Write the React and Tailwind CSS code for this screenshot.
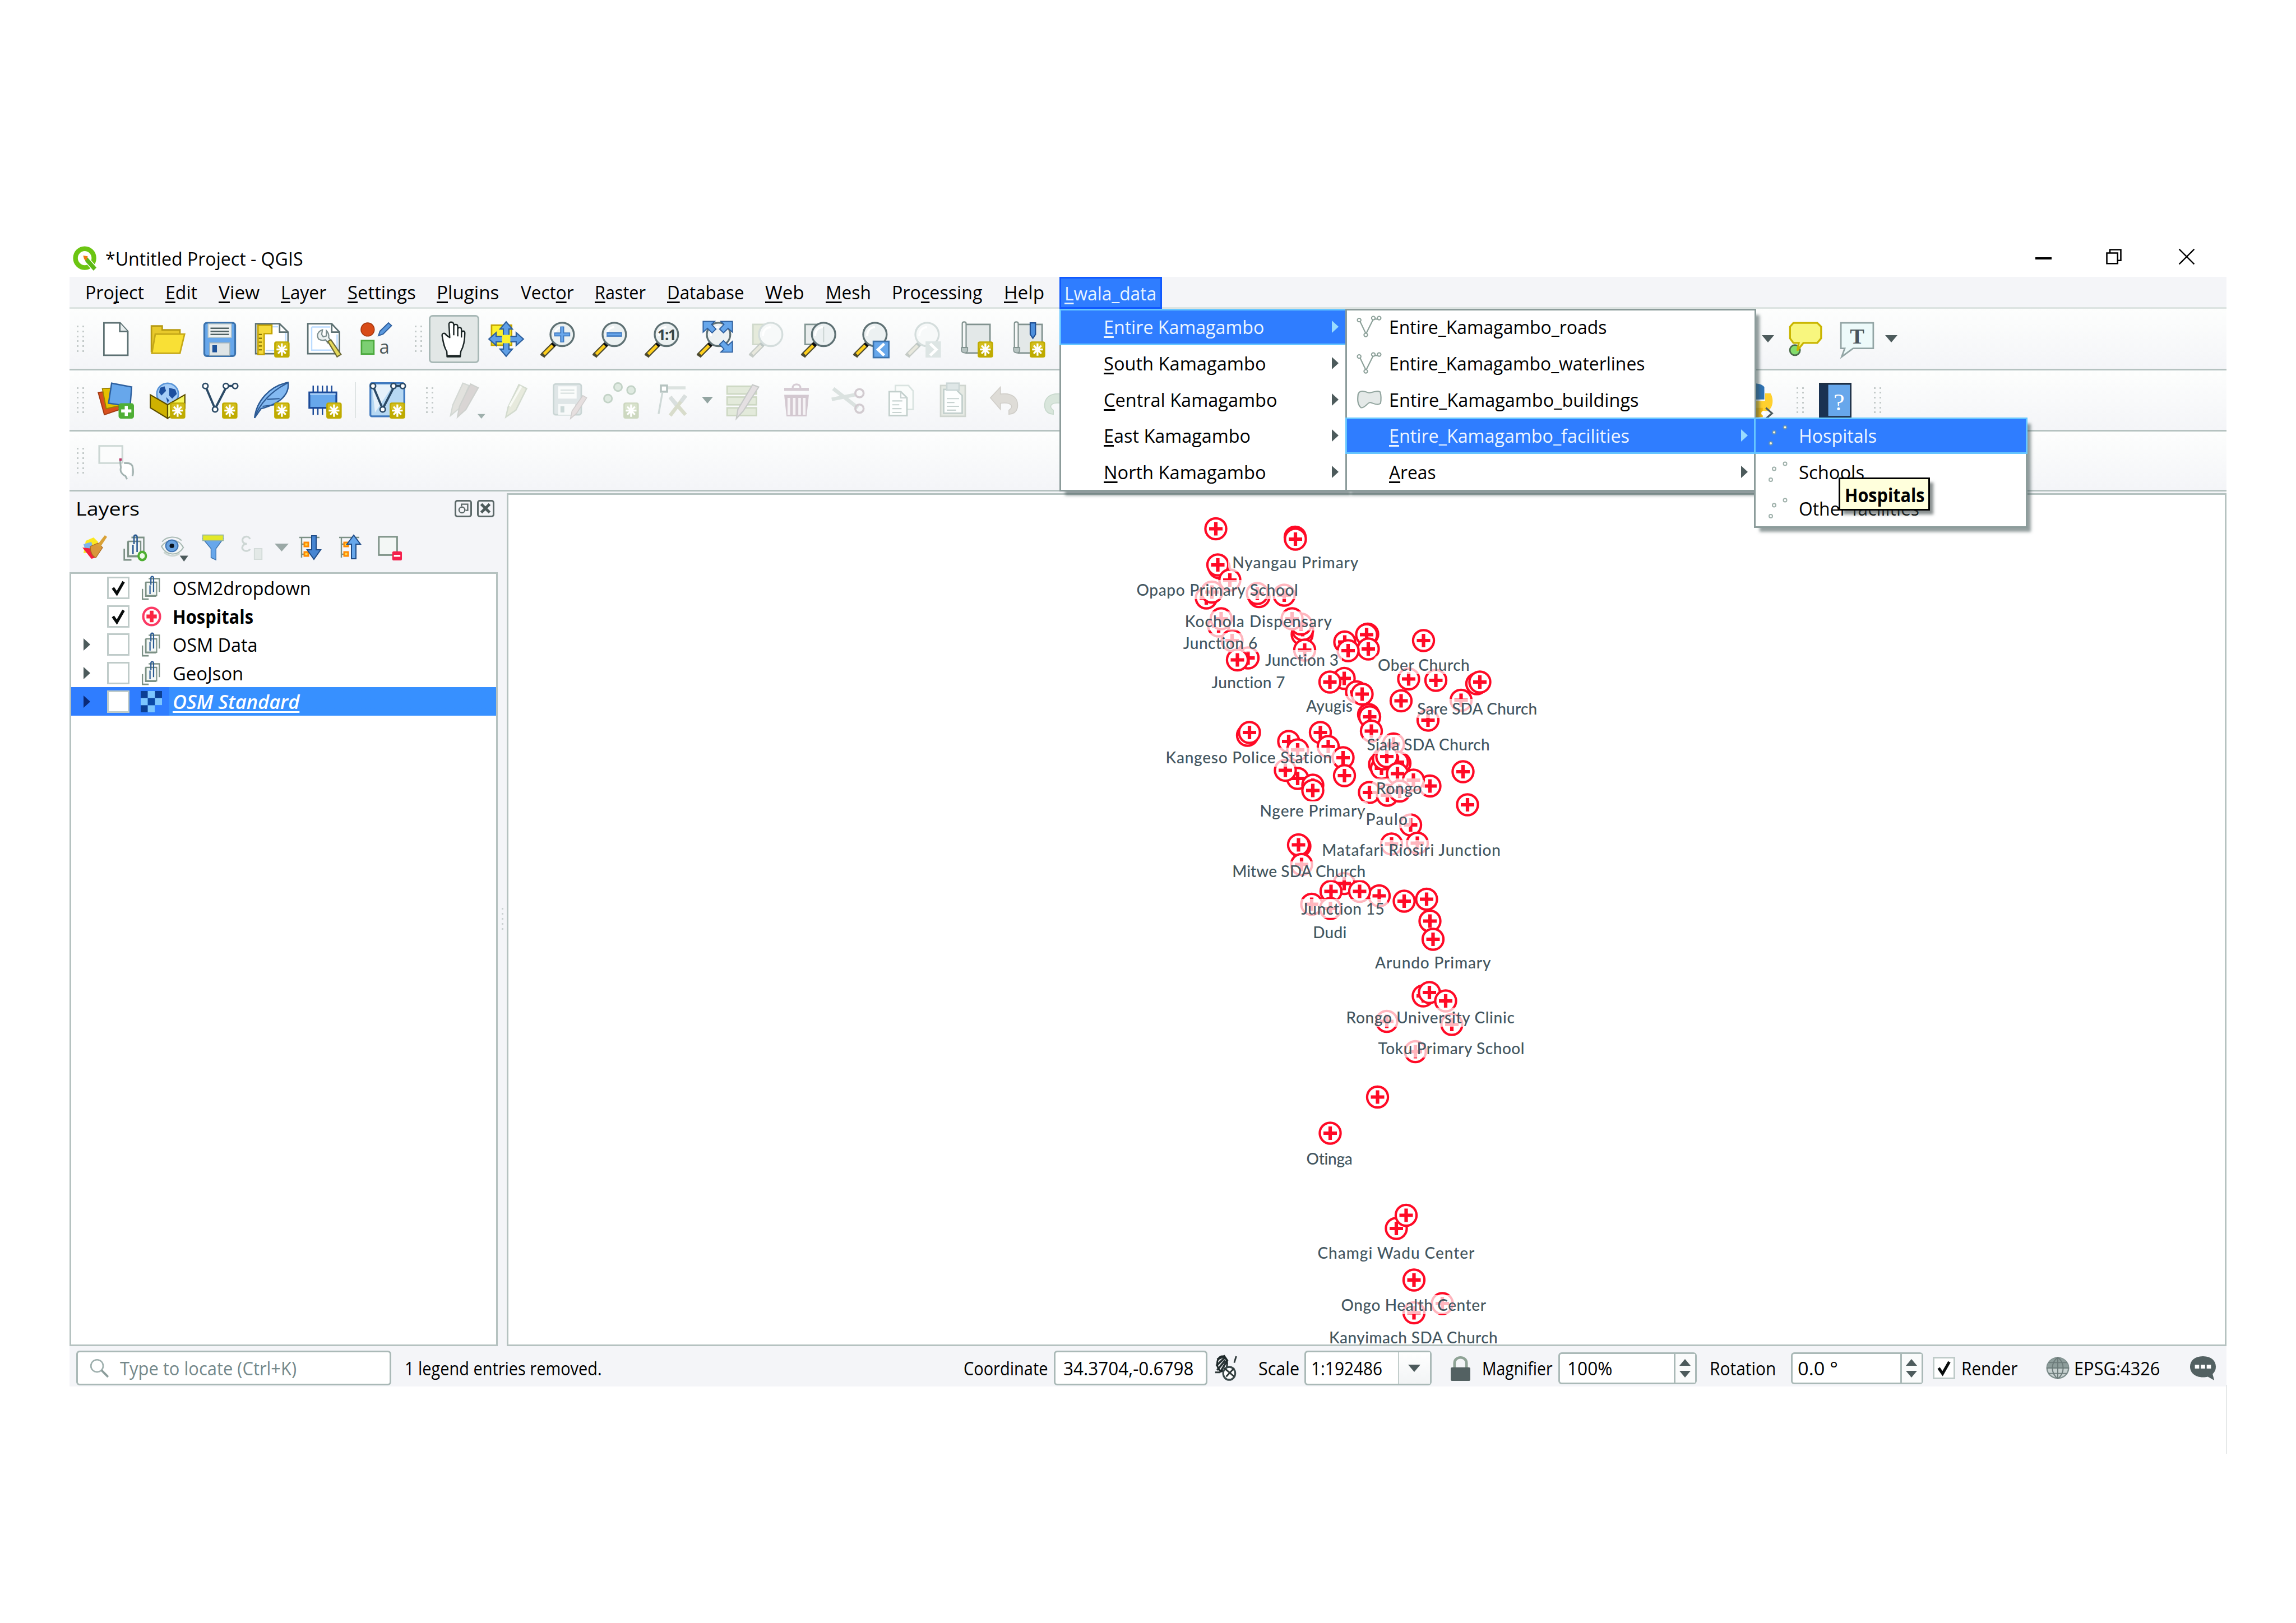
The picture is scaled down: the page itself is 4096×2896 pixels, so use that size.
import React, { useLayoutEffect, useRef } from "react";

/* Text squeezed or stretched to a given width, as the hinted UI font sets it. */
function Fit({ w, children, className = "", spacing = false }) {
  const outer = useRef(null);
  const inner = useRef(null);
  useLayoutEffect(() => {
    const el = inner.current;
    el.style.transform = "none";
    el.style.letterSpacing = "0px";
    outer.current.style.width = w + "px";
    const nat = el.getBoundingClientRect().width;
    if (spacing) {
      el.style.letterSpacing = (w + 2 - nat) / el.textContent.length + "px";
    } else {
      el.style.transform = `translateX(-1px) scaleX(${(w + 2.5) / nat})`;
    }
  }, [w, spacing]);
  return (
    <span ref={outer} className={"inline-block shrink-0 whitespace-nowrap " + className}>
      <span ref={inner} className="inline-block origin-left whitespace-pre">{children}</span>
    </span>
  );
}

/* Label with a mnemonic: "&" stands before the underlined letter. */
function Mnemonic({ text }) {
  const i = text.indexOf("&");
  if (i < 0) return text;
  return (
    <>
      {text.slice(0, i)}
      <span className="underline decoration-[3px] underline-offset-[4px] [text-decoration-skip-ink:none]">{text[i + 1]}</span>
      {text.slice(i + 2)}
    </>
  );
}

const Svg = ({ children, className = "size-[66px]", box = "0 0 24 24" }) => (
  <svg viewBox={box} className={"shrink-0 overflow-visible " + className} fill="none" preserveAspectRatio="none">{children}</svg>
);

const Star = ({ pale }) => (
  <g>
    <rect x="13.5" y="13.5" width="10" height="10.5" rx="1.4" fill={pale ? "#cdd8c0" : "#bfab00"} />
    <rect x="14.5" y="14.3" width="8" height="4" rx="1" fill={pale ? "#d8e2cc" : "#d3bd1c"} />
    <path d="M18.5 14.8v8M15 18.8h7M16 16.2l5 5.2M21 16.2l-5 5.2" stroke="#fff" strokeWidth="1.2" />
  </g>
);
const Plus = () => (
  <g>
    <rect x="14" y="14" width="10" height="10" rx="1.6" fill="#4fae35" />
    <path d="M19 15.7v6.6M15.7 19h6.6" stroke="#fff" strokeWidth="2" />
  </g>
);

const IconNew = () => <Svg><path d="M4.5 1.5h10.5l5 5.5v15.5H4.5z" fill="#fff" stroke="#5c7072" /><path d="M14.8 1.5v5.5h5" fill="#e8eeee" stroke="#5c7072" /></Svg>;
const IconOpen = () => <Svg><path d="M1.5 3.5h7v2.5H20v14H1.5z" fill="#e8c92b" stroke="#b79a12" /><path d="M4 8.8h19l-3 12.4H1.8z" fill="#f9e035" stroke="#c5a818" /></Svg>;
const IconSave = () => (
  <Svg>
    <rect x="2" y="1.5" width="20" height="21.5" rx="1.6" fill="#67a7eb" stroke="#3c73ad" strokeWidth="1.2" />
    <rect x="4.5" y="2.2" width="15" height="8.7" fill="#edf1f1" stroke="#bccaca" strokeWidth=".6" />
    <path d="M6 5h12M6 7h12M6 9h12" stroke="#4f6163" strokeWidth=".9" />
    <rect x="5.5" y="14.5" width="13" height="8" fill="#dfe5e6" stroke="#a7b5b8" strokeWidth=".6" />
    <rect x="7.2" y="16" width="3" height="4.6" fill="#1d529a" />
  </Svg>
);
const IconLayout = () => (
  <Svg>
    <path d="M1.5 2H17l5.5 5.5V21.5H1.5z" fill="#fff" stroke="#5c7072" /><path d="M17 2v5.5h5.5" stroke="#5c7072" />
    <path d="M8 4h8M21 8v11M8 19.5h6" stroke="#bcdcff" strokeWidth=".9" />
    <path d="M3 3h9v5.5H7V22H3z" fill="#f5da3c" stroke="#c2a100" strokeWidth=".9" /><path d="M3.5 9h2M3.5 11.5h2M3.5 14h2M3.5 16.5h2M3.5 19h2" stroke="#7d6a00" strokeWidth=".8" />
    <Star />
  </Svg>
);
const IconManager = () => (
  <Svg>
    <path d="M1.5 2H17l5 5.5V21.5H1.5z" fill="#fff" stroke="#5c7072" /><path d="M17 2v5.5h5" stroke="#5c7072" />
    <path d="M4 4.2h12M4 4.2v15h13M20.5 9v9" stroke="#bcdcff" strokeWidth=".9" />
    <path d="M11 6c-3 1-4 3.500-2.500 6 1.500 1 3 1 4.500.5l1.500 2 2-1.500-1.500-2c.5-2-.5-3.500-1.500-4.500v3.500l-2 .5-1-1.500z" fill="#edf2f2" stroke="#7d8e8e" strokeWidth=".8" />
    <path d="M14.500 13.500l2-1 6.500 9.500-2.500 1.500z" fill="#e6da5b" stroke="#6d6a38" strokeWidth=".8" />
  </Svg>
);
const IconStyle = () => (
  <Svg>
    <circle cx="6.500" cy="5.800" r="4.300" fill="#d84b17" stroke="#a8370e" strokeWidth=".6" />
    <path d="M13.500 9.800l1-3 5.500-5.300 2 1.800-5.500 5.500z" fill="#5a98dd" stroke="#2e5f9e" strokeWidth=".7" />
    <rect x="2.500" y="13" width="8" height="8.700" fill="#7ccf73" stroke="#4aa83c" />
    <text x="14" y="21.300" fontSize="12" fontFamily="Open Sans, sans-serif" fill="#4c5b5c">a</text>
  </Svg>
);
const IconHand = () => (
  <Svg>
    <path d="M7.500 23.500h8.500l.4-3.500c2-3.500 2.600-7 2.600-12 0-1.500-2-1.700-2.200 0V6c0-2-2.300-2-2.400-.2V4c0-2-2.600-2-2.600 0V2.500C11.500.5 8.500.5 8.700 2.500L9.200 11 7 9.500c-.8-1.800-3.200-1.500-2.700.5C5 14 5.500 17.500 7.300 20z" fill="#fff" stroke="#1c2626" strokeWidth=".9" strokeLinejoin="round" />
    <path d="M11.800 4v5.500M14.400 6v4.300M16.800 8v3" stroke="#1c2626" strokeWidth=".9" /><path d="M7.500 23h8.500" stroke="#1c2626" strokeWidth="1.400" />
  </Svg>
);
const IconPan = () => (
  <Svg>
    <rect x="2.500" y="3" width="13" height="13" fill="#fbf12d" stroke="#c5a500" />
    <path d="M12 .8l4 4.700h-2.200v4.700h4.700V7.800L23.200 12l-4.700 4.200v-2.400h-4.700v4.700H16l-4 4.700-4-4.700h2.200v-4.700H5.500v2.400L.8 12l4.700-4.200v2.400h4.700V5.500H8z" fill="#5f9fe6" stroke="#2d5f9e" strokeWidth=".8" />
    <rect x="9.300" y="9.300" width="5.400" height="5.400" fill="#fbf12d" />
  </Svg>
);
const Lens = ({ pale, cx = 14.500 }) => (
  <g>
    <path d="M9 15.500l-6.800 6.800-.6.900" stroke={pale ? "#c5cbc6" : "#4d4a30"} strokeWidth="3.400" />
    <path d="M8.500 16l-5.800 5.800" stroke={pale ? "#e8e8dd" : "#ffcf1c"} strokeWidth="1.900" />
    <path d="M8.300 16.200l2-2" stroke={pale ? "#bdc7c5" : "#0d0d0d"} strokeWidth="3" />
    <circle cx={cx} cy="9" r="7.600" fill={pale ? "#f7f9f9" : "#ecf1f2"} stroke={pale ? "#d4dddc" : "#5f7174"} strokeWidth="1.200" />
    <path d="M9.500 10c0-3.500 2-5.500 5-5.800" stroke="#fff" strokeWidth="1.400" />
  </g>
);
const IconZoomIn = () => <Svg><Lens /><path d="M14.500 3.800v10.400M9.300 9h10.400" stroke="#3f79bf" strokeWidth="2.600" /><path d="M14.500 4.400v9.200M9.900 9h9.200" stroke="#69a7ec" strokeWidth="1.200" /></Svg>;
const IconZoomOut = () => <Svg><Lens /><path d="M9.500 9h10" stroke="#3f79bf" strokeWidth="3" /><path d="M10 9h9" stroke="#69a7ec" strokeWidth="1.200" /></Svg>;
const IconZoomNative = () => <Svg><Lens /><text x="14.500" y="12.800" fontSize="9.500" fontWeight="700" textAnchor="middle" fontFamily="Open Sans, sans-serif" fill="#394547" letterSpacing="-.6">1:1</text></Svg>;
const IconZoomFull = () => (
  <Svg>
    <Lens />
    <path d="M4.500.5h7.500l-2 2 2.800 3-2.500 2.500-3-3-2.800 2.500zM23.500.5H16l2 2-2.800 3L17.700 8l3-3 2.800 2.500zM23.500 20.500H16l2-2-2.800-3 2.500-2.500 3 3 2.800-2.500z" fill="#67a7eb" stroke="#2d5f9e" strokeWidth=".7" />
  </Svg>
);
const IconZoomSel = () => <Svg><rect x="3" y="2.500" width="10" height="13" fill="#e5eadb" stroke="#d0d9cb" /><Lens pale /></Svg>;
const IconZoomLayer = () => <Svg><rect x="3" y="2.500" width="10" height="13" fill="#e9eded" stroke="#829693" /><Lens cx={15} /><path d="M15 4v10" stroke="#cdd6d5" strokeWidth=".8" /></Svg>;
const IconZoomLast = () => <Svg><Lens /><rect x="13.500" y="13.500" width="10" height="10.500" fill="#67a7eb" stroke="#3c73ad" /><path d="M20.500 15l-4 3.800 4 3.800" stroke="#fff" strokeWidth="1.800" /></Svg>;
const IconZoomNext = () => <Svg><Lens pale /><rect x="13.500" y="13.500" width="10" height="10.500" fill="#dde5e4" /><path d="M16.500 15l4 3.800-4 3.800" stroke="#fff" strokeWidth="1.800" /></Svg>;
const MapSheet = () => <g><path d="M5 2.500h16.500v18.500H6z" fill="#e3e8e8" stroke="#81928f" /><path d="M3.500 2c0-1.500 2.500-1.500 2.500 0v15.500H3.500z" fill="#f5f7f7" stroke="#81928f" strokeWidth=".8" /><path d="M3 17.500h4v2c-.5 2-4 2-4-.5z" fill="#b6c3c1" stroke="#81928f" strokeWidth=".6" /></g>;
const IconNewMap = () => <Svg><MapSheet /><Star /></Svg>;
const IconNew3d = () => <Svg><MapSheet /><path d="M13.800 1.500h3.400v7.500L15.500 11.500 13.800 9z" fill="#4d8fdc" stroke="#1f4f93" strokeWidth=".8" /><Star /></Svg>;
const IconTip = () => (
  <Svg>
    <circle cx="5.500" cy="19.200" r="3.300" fill="#82dc6c" stroke="#4b6a4a" />
    <path d="M4.500 1.500h15.500l2.500 2.500v7.500L20 14.500h-9L7 19.500l1-5H4.500L2.300 11.500V4z" fill="#f8f67e" stroke="#c9b500" strokeWidth="1.200" />
  </Svg>
);
const IconText = () => (
  <Svg>
    <path d="M1.500 1.500h21v16.500H9.500L2 23.500l2-5.500H1.500z" fill="#edfafa" stroke="#93a5a5" />
    <text x="12" y="15" fontSize="14" textAnchor="middle" fontFamily="Liberation Serif, serif" fontWeight="700" fill="#48555a">T</text>
  </Svg>
);

const IconDataSource = () => (
  <Svg>
    <path d="M.8 7l4 14.500L15 18 9 6z" fill="#d8501e" stroke="#a33a12" strokeWidth=".7" /><path d="M3.500 4.500L6 17.500l9-2V4z" fill="#e5c200" stroke="#9c8100" strokeWidth=".7" />
    <path d="M9.500 1l13 2.500-1 12.500L7.500 14z" fill="#67a7eb" stroke="#2d5f9e" strokeWidth=".9" /><Plus />
  </Svg>
);
const IconGeoPackage = () => (
  <Svg>
    <circle cx="12" cy="8" r="7" fill="#a6cdf7" stroke="#5a95d8" /><path d="M7 4l3-1 1 3-3 3-1.500-2zM13 4l4 1 1 3-3 3-2-2zM11 10l2 2-1 2z" fill="#1d4f9f" />
    <path d="M.8 8.500L12 15v8.800L.8 17z" fill="#cfb100" stroke="#5c4d00" strokeWidth=".8" /><path d="M23.200 8.500L12 15v8.800l11.200-6.500z" fill="#f6f65c" stroke="#5c4d00" strokeWidth=".8" /><Star />
  </Svg>
);
const Nodes = ({ c = "#2b4a66" }) => (
  <g stroke={c} strokeWidth="1"><path d="M3.200 4l5.500 13M9.300 17L16 4M17.500 2.800h4" strokeWidth="1.400" /><circle cx="2.700" cy="2.800" r="1.700" fill="#fff" /><circle cx="16" cy="2.800" r="1.700" fill="#fff" /><circle cx="22" cy="2.800" r="1.700" fill="#fff" /><circle cx="9" cy="18" r="1.700" fill="#fff" /></g>
);
const IconShape = () => <Svg><Nodes /><Star /></Svg>;
const IconSpatialite = () => <Svg><path d="M.8 23.500C2 13 10 3 22.500.5c1 7-4 13.500-17.500 17z" fill="#83b9f2" stroke="#2c5a94" strokeWidth=".9" /><path d="M.8 23.500C4 14 12 6 22 1M6 16l8-1M9 11.500l8-.5" stroke="#2c5a94" strokeWidth=".8" /><Star /></Svg>;
const IconMemory = () => (
  <Svg><path d="M5 2.500v19M8 2.500v19M11 2.500v19M14 2.500v17M17 2.500v17" stroke="#1c4b99" strokeWidth=".9" /><rect x="2.500" y="7" width="17.500" height="10" fill="#67a7eb" stroke="#1c4b99" strokeWidth="1.200" /><path d="M3 8h16.500" stroke="#b4d7fb" /><Star /></Svg>
);
const IconVirtual = () => <Svg><rect x="1" y="1" width="22" height="21.500" rx="1" fill="#b6d8f3" stroke="#3f79bf" strokeWidth="1.200" /><path d="M2 2h14L4 20z" fill="#e6f1fa" /><Nodes /><Star /></Svg>;
const IconPencils = () => (
  <Svg><path d="M1 22l1.500-7L9 1l4 1.500L7 17z" fill="#e2e2de" stroke="#d3d8d4" strokeWidth=".8" /><path d="M5.500 23l1.300-7L14 1.500 19 4 11 18z" fill="#d9d5d4" stroke="#ced1ce" strokeWidth=".8" /><path d="M18.500 21h5L21 24z" fill="#9eafac" /></Svg>
);
const IconPencil = () => <Svg><path d="M4.500 23l1.500-6.500L13 2l5 2.500-7 14z" fill="#e7eadd" stroke="#d3dbcf" strokeWidth=".9" /><path d="M7 16l7.500-13" stroke="#f8faf4" strokeWidth="1.400" /></Svg>;
const IconSaveEdits = () => (
  <Svg><rect x="2" y="1.500" width="18" height="20" rx="1.500" fill="#dfe6e7" stroke="#c9d5d4" /><rect x="5" y="3" width="12" height="8" fill="#fafcfb" /><path d="M6.500 5.500h9M6.500 7.500h9" stroke="#d9e1e0" strokeWidth=".8" /><rect x="5" y="14.500" width="11" height="7" fill="#f7f9f9" /><rect x="6.500" y="16" width="2.500" height="4" fill="#ccd9d8" /><path d="M13 24l1-5 7-10 2.500 1.500-6.500 10z" fill="#e6dfdf" stroke="#d1cece" strokeWidth=".6" /></Svg>
);
const IconPoints = () => <Svg><g fill="#dfeae1" stroke="#c3d3c7"><circle cx="10" cy="3.500" r="2.600" /><circle cx="18.500" cy="5.500" r="2.600" /><circle cx="3.500" cy="11" r="2.600" /></g><Star pale /></Svg>;
const IconVertex = () => (
  <Svg><path d="M6 4h14" stroke="#dce3e0" strokeWidth="2" /><rect x="4" y="2.500" width="4" height="4" fill="#fff" stroke="#b5c3c0" strokeWidth="1.300" /><path d="M5 7L2.500 21" stroke="#cfd9d7" strokeWidth="1.200" /><path d="M10 10l10 11.500M20 9L10 22" stroke="#d8dccb" strokeWidth="2.400" /><path d="M10 10l4 5M20 9l-3 4" stroke="#d9dfde" strokeWidth="2.600" /></Svg>
);
const IconTable = () => (
  <Svg><g fill="#e3eadb" stroke="#cdd8c3"><rect x="1.500" y="3" width="19" height="5" /><rect x="1.500" y="10" width="19" height="5" /><rect x="1.500" y="17" width="19" height="5" /></g><path d="M7.500 24l1-6L18 2l4 1.500L12 19z" fill="#e4e0e2" stroke="#c7cac8" strokeWidth=".8" /></Svg>
);
const IconTrash = () => <Svg><path d="M4 4h16v2H4z" fill="#d6ccd4" /><path d="M9.500 4c0-3 5-3 5 0" stroke="#d6ccd4" strokeWidth="1.200" /><path d="M4 8.500h16l-1.500 14h-13z" fill="#d3c8d0" /><path d="M7 10.500v11M10.500 10.500v11M14 10.500v11M17 10.500v11" stroke="#f6f4f6" strokeWidth="1.700" /></Svg>;
const IconCut = () => <Svg><path d="M2 4.500l16 12.500M1 11.500l15-3" stroke="#dbe2e0" strokeWidth="2.400" /><circle cx="19" cy="7.500" r="2.700" stroke="#d2cbd0" strokeWidth="1.300" /><circle cx="19" cy="17.500" r="2.700" stroke="#d2cbd0" strokeWidth="1.300" /></Svg>;
const IconCopy = () => <Svg><path d="M8.500 2.500H17l3 3.500v12H8.500z" fill="#fafcfb" stroke="#d9e3e0" /><path d="M4.500 6.500H12l4 4v11.500H4.500z" fill="#fdfefe" stroke="#c2cfcc" /><path d="M12 6.500v4h4M6.500 12.500H13M6.500 15H11M6.500 17.500h6M6.500 20h6" stroke="#c8d3d1" strokeWidth=".8" /></Svg>;
const IconPaste = () => <Svg><rect x="4" y="2.500" width="16" height="20" fill="#e6eae4" stroke="#cfd5cf" /><path d="M6 5h8l4 4v11.500H6z" fill="#fdfefe" stroke="#c2cfcc" /><rect x="8" y="1" width="8" height="4.500" fill="#dfe7e7" stroke="#ccd7d7" /><path d="M8 11h8M8 13.500h5M8 16h8M8 18.500h6" stroke="#c8d3d1" strokeWidth=".8" /></Svg>;
const IconUndo = () => <Svg><path d="M2.500 10.500l6.500-7v4.500c8-1 12 3 11 9-.6 2.500-2.500 4-5.500 4.200v-2.700c3-1.800 2.500-5.500-5.500-4.500v4z" fill="#dedcd7" stroke="#d0cec9" strokeWidth=".6" /></Svg>;
const IconRedo = () => <Svg><path d="M21.500 10.500l-6.500-7v4.500c-8-1-12 3-11 9 .6 2.500 2.500 4 5.500 4.200v-2.700c-3-1.800-2.500-5.500 5.500-4.500v4z" fill="#d9e6dc" stroke="#c7d8cc" strokeWidth=".6" /></Svg>;
const IconPython = () => (
  <Svg><path d="M5 2.500C8 .5 16 .5 18 3.500v8H8v5H3c-3-4-2-10 2-10h7" fill="#2f73b4" /><path d="M18.500 7.500H22c2.500 4 1.500 10-2 11.500h-7v2.500H8v-6c0-2 1-3 3-3h7.500z" fill="#ffd02e" /><path d="M10 17h7v6h-7z" fill="#f3b90c" /><path d="M19 17l4 3.500-4 3.500" stroke="#4d5b5d" strokeWidth="1.200" /><circle cx="17.500" cy="20.500" r="1.500" fill="#fff" /></Svg>
);
const IconHelp = () => (
  <Svg className="h-[62px] w-[58px]" box="0 0 21 23"><rect x=".5" y=".5" width="20" height="22" fill="#67a7eb" stroke="#1e2f44" /><path d="M0 0h6v23H0z" fill="#1a3252" /><path d="M0 0h21v1.300H0z" fill="#1e2f44" /><text x="13" y="18" fontSize="16" textAnchor="middle" fontFamily="Liberation Serif, serif" fill="#fff">?</text></Svg>
);

const Grip = () => (
  <div className="grid grid-cols-2 gap-x-[7px] gap-y-[5.800px]">
    {Array.from({ length: 12 }, (_, i) => <i key={i} className="size-[3px] bg-[#c3cac9]" />)}
  </div>
);
const GripCell = ({ className }) => <div className={"flex h-full shrink-0 items-center justify-center " + className}><Grip /></div>;
const Cell = ({ className = "w-[93px]", children }) => <div className={"flex h-full shrink-0 items-center justify-center " + className}>{children}</div>;
const Down = ({ className = "h-[13px] w-[22px]", fill = "#4d5b5c" }) => <Svg className={className} box="0 0 20 12"><path d="M0 0h20L10 12z" fill={fill} /></Svg>;
const Up = () => <Svg className="h-[12px] w-[20px]" box="0 0 20 12"><path d="M0 12h20L10 0z" fill="#4d5b5c" /></Svg>;
const RightArrow = ({ fill = "#4d5b5c" }) => <Svg className="h-[22px] w-[12px]" box="0 0 12 22"><path d="M0 0v22L12 11z" fill={fill} /></Svg>;

const MENUS = [["Pro&ject", 102.5], ["&Edit", 54.4], ["&View", 70.6], ["&Layer", 78.8], ["&Settings", 119.3], ["&Plugins", 108.9], ["Vect&or", 92], ["&Raster", 88.5], ["&Database", 135], ["&Web", 67.2], ["&Mesh", 78.4], ["Pro&cessing", 159], ["&Help", 69.6]];

const bar = "flex shrink-0 items-center border-b-[3px] border-[#b5c2c0] bg-linear-to-b from-[#fdfefd] to-[#f4f5f8]";

/* ---------- layers dock ---------- */
const IconBrush = () => <Svg className="size-[48px]"><path d="M4 6l7-3 4 4-4 9-9 1z" fill="#fbe820" /><path d="M2 9l7-2 2 7-7 2z" fill="#7fb4ec" /><path d="M1 12l9 1 3 8-4 1z" fill="#f5203c" /><path d="M8 11l7-3 4 4-6 9c-3-1-5-5-5-10z" fill="#d9973a" stroke="#a96a1c" strokeWidth=".6" /><path d="M14 10l7-9 2 1.500-6 9z" fill="#d9a136" /></Svg>;
const GroupShape = () => (
  <g><path d="M9 3h12v13M5.500 6.500V20h12" stroke="#7c9186" strokeWidth="1.400" /><rect x="6" y="6.500" width="12" height="13" fill="#f3f7f5" stroke="#7c9186" strokeWidth="1.300" /><path d="M2 13v10h7" stroke="#7c9186" strokeWidth="1.500" /><path d="M10.500 9.500v8.500M14.500 16V2.500c0-2-3-2-3 0V9" stroke="#2b5a92" strokeWidth="1.400" /></g>
);
const IconGroup = () => <Svg className="h-[44px] w-[38px]"><GroupShape /></Svg>;
const IconAddGroup = () => <Svg className="h-[48px] w-[44px]"><GroupShape /><circle cx="19.500" cy="19.500" r="3.600" fill="#eef9ea" stroke="#4eae32" strokeWidth="2.200" /></Svg>;
const IconEye = () => <Svg className="h-[50px] w-[52px]"><path d="M1 11c5-7 14-7 18 1-5 8-14 7-18-1z" fill="#f5f8f7" stroke="#a9bab4" /><path d="M1.500 7c4-5 12-5 16-1" stroke="#a9bab4" /><circle cx="9.500" cy="10.500" r="5" fill="#6aa3e0" stroke="#3f74b4" /><circle cx="9.500" cy="10.500" r="1.900" fill="#08131f" /><path d="M3 16c4 4 9 4 13 1" stroke="#ccd6d2" strokeWidth="1.400" /><path d="M16 19h7l-3.500 5z" fill="#4d5b5c" /></Svg>;
const IconFilter = () => <Svg className="h-[48px] w-[42px]"><path d="M1.500 4h21L15 13v10l-5-2V13z" fill="#67a7eb" stroke="#3c73ad" strokeWidth=".8" /><path d="M1.500.8h21v5h-21z" fill="#e3e829" stroke="#93b4a0" strokeWidth=".8" /></Svg>;
const IconExpr = () => <Svg className="size-[46px]"><path d="M10 4c-2-4-8-2-7 2 .3 1.500 1.500 2.500 4 2.500-4 0-5.500 4-3 6 2 1.500 5 .5 6-1" stroke="#cdd6d4" strokeWidth="1.700" /><path d="M14 13h7v10h-7z" fill="#e3e9e7" stroke="#d3dbd9" /></Svg>;
const IconExpand = () => <Svg className="size-[48px]"><path d="M1 3h18M3 3v18M3 9h4M3 18h4" stroke="#7c9186" strokeWidth="1.200" /><g fill="#ffd84a" stroke="#ff8a00" strokeWidth="1.500"><rect x="5.500" y="7.500" width="3.500" height="3.500" /><rect x="5.500" y="16" width="3.500" height="3.500" /></g><path d="M12 1.500h4V14h4l-6 8.500L8 14h4z" fill="#4685d2" stroke="#1f4c88" /></Svg>;
const IconCollapse = () => <Svg className="size-[48px]"><path d="M1 3h18M3 3v18M3 9h4M3 18h4" stroke="#7c9186" strokeWidth="1.200" /><g fill="#ffd84a" stroke="#ff8a00" strokeWidth="1.500"><rect x="5.500" y="7.500" width="3.500" height="3.500" /><rect x="5.500" y="16" width="3.500" height="3.500" /></g><path d="M12 22V9H8l6-8 6 8h-4v13z" fill="#67a7eb" stroke="#1f4c88" /></Svg>;
const IconRemove = () => <Svg className="size-[46px]"><rect x="2" y="2" width="17" height="17" fill="#f3f7f5" stroke="#7c9186" strokeWidth="1.500" /><rect x="14.500" y="15.500" width="9" height="8.500" rx="1.500" fill="#f5204c" /><path d="M16 19.700h6" stroke="#fff" strokeWidth="1.800" /></Svg>;
const Marker = ({ x, y }) => (
  <g transform={`translate(${x} ${y})`}><circle r="18.600" fill="#fff" stroke="#ff0a26" strokeWidth="4.200" /><path d="M0-12v24M-12 0h24" stroke="#ff0a26" strokeWidth="6.200" /></g>
);
const IconHospital = () => <Svg className="h-[36px] w-[35px]" box="-21 -21 42 42"><circle r="18" fill="#fff" stroke="#fb3a64" strokeWidth="5" /><path d="M0-12v24M-11 0h22" stroke="#fb2440" strokeWidth="8" /></Svg>;
const IconRaster = () => (
  <Svg className="size-[38px]" box="0 0 6 6"><rect width="6" height="6" fill="#3a8ff5" /><path d="M0 0h2v2H0zM4 0h2v2H4zM2 2h2v2H2zM0 4h2v2H0z" fill="#0b3f94" /><path d="M2 0h2v2H2zM0 2h2v2H0zM4 2h2v2H4zM2 4h2v2H2z" fill="#7cc6ff" /><path d="M4 4h2v2H4z" fill="#2f7dff" /><path d="M2 2h2v2H2z" fill="#0b4aa8" /></Svg>
);
const CheckBox = ({ on }) => (
  <span className="flex size-[40px] shrink-0 items-center justify-center border-[3px] border-[#bfcbc9] bg-white">
    {on && <Svg className="h-[28px] w-[24px]" box="0 0 24 28"><path d="M2.500 14l7 10L21.500 3" stroke="#080c0c" strokeWidth="5" /></Svg>}
  </span>
);

const LAYERS = [
  { name: "OSM2dropdown", w: 244, on: true, icon: <IconGroup /> },
  { name: "Hospitals", w: 141.6, on: true, icon: <IconHospital />, cls: "font-bold" },
  { name: "OSM Data", w: 149, arrow: true, icon: <IconGroup /> },
  { name: "GeoJson", w: 123.7, arrow: true, icon: <IconGroup /> },
  { name: "OSM Standard", w: 223.8, arrow: true, icon: <IconRaster />, sel: true, cls: "font-semibold italic text-white" },
];

function LayersDock() {
  return (
    <section className="flex w-[764px] shrink-0 flex-col">
      <div className="flex h-[60px] items-center pl-[12px]">
        <Fit w={111.500}>Layers</Fit>
        <span className="ml-[563px] flex h-[31px] w-[31px] items-center justify-center rounded-[5px] border-[3px] border-[#5c6969]">
          <Svg className="size-[19px]"><path d="M8 7V2h14v14h-5" stroke="#5c6969" strokeWidth="3" /><circle cx="9" cy="15" r="6.500" stroke="#5c6969" strokeWidth="3" /></Svg>
        </span>
        <span className="ml-[9px] flex h-[31px] w-[31px] items-center justify-center rounded-[5px] border-[3px] border-[#5c6969]">
          <Svg className="size-[20px]"><path d="M3 3l18 18M21 3L3 21" stroke="#4d5a5a" strokeWidth="6" /></Svg>
        </span>
      </div>
      <div className="flex h-[84px] items-center pb-[4px] pl-[10px]">
        <Cell className="w-[70px]"><IconBrush /></Cell>
        <Cell className="w-[71px]"><IconAddGroup /></Cell>
        <Cell className="w-[74px]"><IconEye /></Cell>
        <Cell className="w-[62px]"><IconFilter /></Cell>
        <Cell className="w-[78px]"><IconExpr /></Cell>
        <Cell className="w-[26px]"><Down className="h-[14px] w-[25px]" fill="#9aa8a6" /></Cell>
        <Cell className="w-[81px]"><IconExpand /></Cell>
        <Cell className="w-[62px]"><IconCollapse /></Cell>
        <Cell className="w-[74px]"><IconRemove /></Cell>
      </div>
      <div className="flex flex-1 flex-col border-[3px] border-[#b5c2c0] bg-white">
        {LAYERS.map((l) => (
          <div key={l.name} className={"flex h-[50.600px] shrink-0 items-center " + (l.sel ? "bg-linear-to-r from-[#2f7dff] from-[174px] to-[#3790ff] to-[175px]" : "")}>
            <span className="flex w-[64px] pl-[22px]">{l.arrow && <RightArrow fill={l.sel ? "#0a2a78" : "#4d5b5c"} />}</span>
            <CheckBox on={l.on} />
            <span className="flex w-[78px] items-center justify-center">{l.icon}</span>
            <Fit w={l.w} className={l.cls || ""}>
              {l.sel ? <span className="underline decoration-[3px] underline-offset-[4px] [text-decoration-skip-ink:none]">{l.name}</span> : l.name}
            </Fit>
          </div>
        ))}
      </div>
    </section>
  );
}

/* ---------- map canvas ---------- */
const SITES = [
  [2169, 943.5], [2310.5, 958.5], [2311, 962], [2175, 1013], [2172.5, 1008], [2194, 1035], [2152, 1067], [2162, 1056.5], [2246, 1064.5], [2243, 1059], [2291, 1062],
  [2174, 1117], [2178.5, 1104], [2198, 1143], [2323, 1132], [2324, 1123.5], [2321, 1113.5], [2305, 1104], [2327.5, 1160], [2226.5, 1174], [2207.5, 1177.5],
  [2440, 1131.5], [2438, 1132.5], [2399, 1145.5], [2441, 1158], [2405, 1161], [2539.5, 1143], [2398, 1210.5], [2372.5, 1217], [2513, 1211.5], [2561.5, 1214],
  [2634.5, 1220], [2640, 1217], [2420, 1234.5], [2430, 1238.5], [2499.5, 1250.5], [2606.5, 1249.5], [2547.5, 1285], [2441.5, 1275], [2443.5, 1279], [2446.5, 1304.5],
  [2225.5, 1312], [2229, 1307], [2355.5, 1307], [2299, 1323], [2315, 1338], [2369.5, 1332], [2396, 1352], [2398.5, 1384], [2486, 1327.5], [2497.5, 1362], [2493, 1360],
  [2461, 1364], [2464.5, 1371], [2468, 1354], [2474, 1350], [2493, 1380.5], [2551, 1402.5], [2521.5, 1392], [2610, 1377], [2618, 1436], [2443, 1414], [2475, 1419], [2497, 1411.5],
  [2315, 1389], [2293, 1374.5], [2342, 1401], [2342, 1410.5], [2516.5, 1472], [2482.5, 1506], [2528.5, 1504.5], [2319, 1510], [2316.5, 1507.5], [2322, 1542.5],
  [2398, 1576.5], [2374.5, 1590.5], [2460.5, 1598.5], [2425.5, 1590.5], [2340, 1613.5], [2373.5, 1621], [2505, 1608], [2545, 1604.5], [2551, 1643.5], [2556.5, 1676],
  [2539, 1777], [2550, 1771], [2579, 1786], [2474, 1822.5], [2590, 1828], [2525, 1876.5], [2457.5, 1957.5], [2373, 2022], [2491, 2192], [2508.5, 2168.5], [2522.5, 2284], [2573, 2326], [2522.5, 2342.5],
];
const PLACES = [
  ["Nyangau Primary", 2198.8, 2422.7, 1013], ["Opapo Primary School", 2027.9, 2315, 1062.7], ["Kochola Dispensary", 2114.3, 2375.7, 1118.8], ["Junction 6", 2111.3, 2242.7, 1157],
  ["Junction 3", 2257.4, 2387.3, 1187], ["Ober Church", 2458.6, 2620.8, 1196.2], ["Junction 7", 2161.9, 2291.8, 1227.8], ["Ayugis", 2330.7, 2411.6, 1269.3],
  ["Sare SDA Church", 2528.8, 2741, 1274.2], ["Siala SDA Church", 2438.9, 2656.7, 1338.8], ["Kangeso Police Station", 2080, 2375.7, 1361], ["Rongo", 2455.5, 2535.6, 1416.5],
  ["Ngere Primary", 2248, 2435, 1456.6], ["Paulo", 2437, 2511, 1471.9], ["Matafari Riosiri Junction", 2358.8, 2676.8, 1526.7], ["Mitwe SDA Church", 2198.7, 2434.7, 1564],
  ["Junction 15", 2322, 2469, 1631.7], ["Dudi", 2342.7, 2401, 1673.6], ["Arundo Primary", 2453.6, 2658.8, 1727.5], ["Rongo University Clinic", 2402, 2701, 1825.5],
  ["Toku Primary School", 2459, 2718.6, 1880], ["Otinga", 2331, 2411.5, 2077], ["Chamgi Wadu Center", 2351, 2629.7, 2245], ["Ongo Health Center", 2393, 2650, 2338.9],
  ["Kanyimach SDA Church", 2371.5, 2670.6, 2396.8],
];
const ORIGIN = { x: 907, y: 883 };

function MapCanvas() {
  return (
    <section className="relative mt-[3px] flex-1 overflow-hidden border-[3px] border-[#b5c2c0] bg-white">
      <svg viewBox="907 883 3062 1516" className="absolute left-0 top-0 h-[1516px] w-[3062px]">
        {SITES.map(([x, y], i) => <Marker key={i} x={x} y={y} />)}
      </svg>
      {PLACES.map(([name, l, r, base]) => (
        <span key={name} className="absolute flex h-[34px] items-center rounded-[9px] bg-white/70 px-[7px] font-['Lato',sans-serif] text-[28px] font-medium leading-[34px] text-[#435660]" style={{ left: l - 7.5 - ORIGIN.x, top: base - 27.5 - ORIGIN.y }}>
          <Fit spacing w={r - l}>{name}</Fit>
        </span>
      ))}
    </section>
  );
}

/* ---------- status bar ---------- */
const Search = () => <Svg className="size-[35px]"><circle cx="9" cy="9" r="7.500" stroke="#9fb0ae" strokeWidth="1.800" /><path d="M14.500 14.500l8 8" stroke="#8b9d9b" strokeWidth="2.600" /></Svg>;
const field = "flex shrink-0 items-center rounded-[6px] border-[3px] border-[#aab9b7] bg-white";
const Spin = () => <span className="flex h-full w-[38px] shrink-0 flex-col items-center justify-center gap-[9px] border-l-[3px] border-[#aab9b7] bg-[#fafbfb]"><Up /><Down className="h-[12px] w-[20px]" /></span>;

function StatusBar() {
  return (
    <footer className="flex h-[72px] shrink-0 items-center bg-[#f4f5f8] pl-[12px] pt-[6px]">
      <div className={field + " h-[62px] w-[562px] pl-[21px]"}>
        <Search /><Fit w={312.600} className="ml-[20px] text-[#74888a]">Type to locate (Ctrl+K)</Fit>
      </div>
      <Fit w={349} className="ml-[25px]">1 legend entries removed.</Fit>
      <Fit w={148} className="ml-[648px]">Coordinate</Fit>
      <div className={field + " ml-[12px] h-[62px] w-[274px] pl-[15px]"}><Fit w={230}>34.3704,-0.6798</Fit></div>
      <Svg className="ml-[12px] h-[46px] w-[43px]">
        <path d="M3 4l7-3 3 4-7 11M2 10l9-8M3 14l8-9" stroke="#283334" strokeWidth="2" /><ellipse cx="8" cy="8" rx="5" ry="7" stroke="#1d2728" strokeWidth="1.600" /><ellipse cx="15" cy="17" rx="6" ry="6" fill="#fff" stroke="#3c4a4b" strokeWidth="1.800" /><path d="M10 12l10 8M12 20l8-8M22 1l-2 6M1 16h5" stroke="#2d3838" strokeWidth="1.600" />
      </Svg>
      <Fit w={70.700} className="ml-[37px]">Scale</Fit>
      <div className={field + " ml-[10px] h-[62px] w-[227px] justify-between pl-[10px]"}>
        <Fit w={124.600}>1:192486</Fit>
        <span className="flex h-full w-[57px] items-center justify-center border-l-[2px] border-[#c3cecc] bg-linear-to-b from-white to-[#f2f4f5]"><Down /></span>
      </div>
      <Svg className="ml-[34px] h-[45px] w-[35px]" box="0 0 18 24"><path d="M3.500 12V7c0-7 11-7 11 0v5" stroke="#8fa396" strokeWidth="2.400" /><rect x="0" y="11" width="18" height="13" rx="1.500" fill="#536162" /></Svg>
      <Fit w={123} className="ml-[22px]">Magnifier</Fit>
      <div className={field + " ml-[12px] h-[57px] w-[247px] justify-between pl-[14px]"}><Fit w={78}>100%</Fit><Spin /></div>
      <Fit w={116} className="ml-[24px]">Rotation</Fit>
      <div className={field + " ml-[28px] h-[57px] w-[236px] justify-between pl-[10px]"}><Fit w={69.500}>0.0 °</Fit><Spin /></div>
      <span className="ml-[17px] flex"><CheckBox on /></span>
      <Fit w={98} className="ml-[12px]">Render</Fit>
      <Svg className="ml-[51px] h-[42px] w-[44px]"><circle cx="12" cy="12" r="10.500" fill="#c6d0cf" stroke="#7d8d8c" strokeWidth="1.300" /><path d="M1.500 12C3-2 21-2 22.500 12z" fill="#8d9d9b" /><path d="M12 1v22M1 12h22M3 6.500h18M3 17.500h18M12 1c-7 6-7 16 0 22M12 1c7 6 7 16 0 22" stroke="#6c7b7a" strokeWidth="1.100" /></Svg>
      <Fit w={151} className="ml-[8px]">EPSG:4326</Fit>
      <Svg className="ml-[55px] h-[45px] w-[46px]"><path d="M12 .5C4 .5 0 5 0 10.500S4.500 20.500 12 20.500c2 0 3 0 4.500-.5l6 3.500-1.500-6c2-2 3-4 3-7C24 5 20 .5 12 .5z" fill="#536162" /><path d="M4.500 10.500h4M10 10.500h4M15.500 10.500h4" stroke="#fff" strokeWidth="3.600" /></Svg>
    </footer>
  );
}

/* ---------- menus ---------- */
const LineIcon = () => <Svg className="h-[40px] w-[45px]" box="0 0 24 22"><path d="M3 5l6 13L16 3.500h5" stroke="#8da19a" strokeWidth="1.200" /><g fill="#fff" stroke="#8da19a" strokeWidth="1.100"><circle cx="2.500" cy="4.500" r="1.700" /><circle cx="8.800" cy="19" r="1.700" /><circle cx="16" cy="2.500" r="1.700" /><circle cx="21.500" cy="2.500" r="1.700" /></g></Svg>;
const PolyIcon = () => <Svg className="h-[34px] w-[45px]" box="0 0 24 20"><path d="M1.500 4.500C3-.5 7 1 12 3c4-.5 7-3 10.500-1 1 4 1 8 .3 12-3 2.500-6 0-10-1-3 1-5 6-8.500 5.500C.5 15 1 9 1.500 4.500z" fill="#e4e9e8" stroke="#92a59f" strokeWidth="1.200" /></Svg>;
const PointIcon = ({ on }) => <Svg className="h-[40px] w-[34px]" box="0 0 34 40"><g fill={on ? "#fff6cf" : "#fff"} stroke={on ? "#5d8fbd" : "#9fb1ab"} strokeWidth="2"><circle cx="4" cy="34" r="3" /><circle cx="10" cy="14.500" r="3" /><circle cx="29.500" cy="5.500" r="3" /></g></Svg>;

function MenuItem({ text, w, hot, arrow, icon, gutter }) {
  return (
    <div className={"flex h-[64.700px] shrink-0 items-center " + (hot ? "-mx-[3px] border-[3px] border-[#66c6ff] bg-[#2f7dff] text-[#eef6ff]" : "")}>
      <span className={"flex shrink-0 items-center " + gutter}>{icon}</span>
      <Fit w={w}><Mnemonic text={text} /></Fit>
      {arrow && <span className="ml-auto mr-[12px] flex"><RightArrow fill={hot ? "#9adcff" : "#4d5b5c"} /></span>}
    </div>
  );
}
const popup = "absolute flex flex-col border-x-[3px] border-[#8c9c9b] bg-white shadow-[8px_9px_5px_-2px_rgba(60,80,80,0.55)]";

export default function App() {
  return (
    <div className="h-[2896px] w-[4096px] overflow-hidden bg-white pl-[124px] pt-[428px] font-['Open_Sans','Noto_Sans',sans-serif] text-[33.600px] leading-[46px] text-black">
      <main className="relative flex h-[2046px] w-[3848px] flex-col">
        <header className="flex h-[66px] shrink-0 items-center pl-[6px]">
          <Svg className="h-[45px] w-[44px]"><circle cx="11.500" cy="11.500" r="9" stroke="#6cc512" strokeWidth="4.600" /><path d="M10 9.500l4 .5 9.500 10.500L20 24l-8-9z" fill="#5bb816" stroke="#fff" strokeWidth=".8" /><path d="M10 9l4.500.7L13 14l-2-1.500z" fill="#ee7913" /></Svg>
          <Fit w={350} className="ml-[15px]">*Untitled Project - QGIS</Fit>
          <span className="ml-[3092px] h-[4px] w-[29px] bg-black" />
          <Svg className="ml-[97px] mb-[6px] h-[28px] w-[28px]"><path d="M1.300 6.500h16.500v16H1.300z" stroke="#000" strokeWidth="2.200" /><path d="M6 6V1.300h16.700v16.500H18" stroke="#000" strokeWidth="2.200" /></Svg>
          <Svg className="ml-[102px] mb-[6px] h-[28px] w-[28px]"><path d="M.5.5l23 23M23.500.5l-23 23" stroke="#000" strokeWidth="2" /></Svg>
        </header>

        <nav className="flex h-[57px] shrink-0 items-center gap-[40.350px] border-b-[3px] border-[#dde4e2] bg-[#f4f5f8] pl-[29px]">
          {MENUS.map(([t, w]) => <Fit key={t} w={w}><Mnemonic text={t} /></Fit>)}
          <span className="-ml-[12px] -mb-[3px] flex h-[57px] w-[183px] items-center border-[3px] border-[#1059ff] bg-[#2f7dff] pl-[7px] text-[#e8f4ff]"><Fit w={161.500}><Mnemonic text="&Lwala_data" /></Fit></span>
        </nav>

        <div className={bar + " h-[110px]"}>
          <GripCell className="w-[35px] pl-[4px]" />
          <Cell><IconNew /></Cell><Cell><IconOpen /></Cell><Cell><IconSave /></Cell><Cell><IconLayout /></Cell><Cell><IconManager /></Cell><Cell><IconStyle /></Cell>
          <GripCell className="w-[46px] pl-[12px]" />
          <Cell><span className="flex h-[86px] w-[90px] items-center justify-center rounded-[7px] border-[3px] border-[#a8b8b6] bg-[#e2e7e6]"><IconHand /></span></Cell>
          <Cell><IconPan /></Cell><Cell><IconZoomIn /></Cell><Cell><IconZoomOut /></Cell><Cell><IconZoomNative /></Cell><Cell><IconZoomFull /></Cell><Cell><IconZoomSel /></Cell><Cell><IconZoomLayer /></Cell><Cell><IconZoomLast /></Cell><Cell><IconZoomNext /></Cell><Cell><IconNewMap /></Cell><Cell><IconNew3d /></Cell>
          <div className="ml-auto flex h-full items-center pr-[583px]">
            <Cell className="w-[38px]"><Down /></Cell><Cell><IconTip /></Cell><Cell><IconText /></Cell><Cell className="w-[30px]"><Down /></Cell>
          </div>
        </div>

        <div className={bar + " h-[109px]"}>
          <GripCell className="w-[35px] pl-[4px]" />
          <Cell><IconDataSource /></Cell><Cell><IconGeoPackage /></Cell><Cell><IconShape /></Cell><Cell><IconSpatialite /></Cell><Cell><IconMemory /></Cell>
          <Cell className="w-[20px]"><i className="h-[64px] w-[2px] bg-[#dfe4e4]" /></Cell>
          <Cell><IconVirtual /></Cell>
          <GripCell className="w-[53px] pl-[5px]" />
          <Cell className="w-[88px]"><IconPencils /></Cell><Cell className="w-[90px]"><IconPencil /></Cell><Cell><IconSaveEdits /></Cell><Cell><IconPoints /></Cell><Cell><IconVertex /></Cell>
          <Cell className="w-[30px]"><Down className="h-[12px] w-[20px]" fill="#93a5a2" /></Cell>
          <Cell className="w-[97px]"><IconTable /></Cell><Cell><IconTrash /></Cell><Cell><IconCut /></Cell><Cell><IconCopy /></Cell><Cell><IconPaste /></Cell><Cell><IconUndo /></Cell><Cell><IconRedo /></Cell>
          <div className="ml-auto flex h-full items-center pr-[577px]">
            <Cell><IconPython /></Cell><GripCell className="w-[68px]" /><Cell className="w-[58px]"><IconHelp /></Cell><GripCell className="w-[92px]" />
          </div>
        </div>

        <div className={bar + " h-[107px]"}>
          <GripCell className="w-[35px] pl-[4px]" />
          <Cell>
            <Svg><path d="M1.500 3h15v14h-15z" fill="#fbfcfc" stroke="#ccd7d4" strokeWidth="1.200" transform="scale(1 .8)" /><path d="M16 14c3-1.500 6.500 0 6.500 3l-1 5-2.500.5c-2.500-1.500-3.500-3-3-8.500z" fill="#fff" /><path d="M15 10.500c0 3 .3 4 .5 6-.8 2.500.8 4.500 3 5.500l1 2M23 22c.8-2 .5-4 0-6.500-1-2-3-2-5.500-2" stroke="#a3b3b1" strokeWidth="1.100" /><path d="M14.500 10.500h1.500v1.500h-1.500z" fill="#b9386a" /></Svg>
          </Cell>
        </div>

        <div className="flex min-h-0 flex-1 bg-[#f4f5f8]">
          <LayersDock />
          <div className="flex w-[16px] shrink-0 flex-col items-center justify-center gap-[6px]">
            {[0, 1, 2, 3, 4].map((i) => <i key={i} className="size-[3px] bg-[#c9d0d0]" />)}
          </div>
          <MapCanvas />
        </div>
        <StatusBar />

        <div className={popup + " left-[1766px] top-[123px] w-[513px] border-b-[3px]"}>
          <MenuItem hot arrow gutter="w-[77px]" text="&Entire Kamagambo" w={283.800} />
          <MenuItem arrow gutter="w-[77px]" text="&South Kamagambo" w={287} />
          <MenuItem arrow gutter="w-[77px]" text="&Central Kamagambo" w={307} />
          <MenuItem arrow gutter="w-[77px]" text="&East Kamagambo" w={259.500} />
          <MenuItem arrow gutter="w-[77px]" text="&North Kamagambo" w={287} />
        </div>
        <div className={popup + " left-[2276px] top-[123px] w-[733px] border-b-[3px]"}>
          <span className="absolute -left-[3px] top-0 h-[3px] w-[733px] bg-[#8c9c9b]" />
          <MenuItem gutter="w-[76px] pl-[17px]" icon={<LineIcon />} text="Entire_Kamagambo_roads" w={386} />
          <MenuItem gutter="w-[76px] pl-[17px]" icon={<LineIcon />} text="Entire_Kamagambo_waterlines" w={454} />
          <MenuItem gutter="w-[76px] pl-[17px]" icon={<PolyIcon />} text="Entire_Kamagambo_buildings" w={443} />
          <MenuItem hot arrow gutter="w-[76px]" text="&Entire_Kamagambo_facilities" w={426.500} />
          <MenuItem arrow gutter="w-[76px]" text="&Areas" w={81} />
        </div>
        <div className={popup + " left-[3005px] top-[317px] w-[488px] border-b-[3px]"}>
          <MenuItem hot gutter="w-[78px] pl-[23px]" icon={<PointIcon on />} text="Hospitals" w={136.600} />
          <MenuItem gutter="w-[78px] pl-[23px]" icon={<PointIcon />} text="Schools" w={114.500} />
          <MenuItem gutter="w-[78px] pl-[23px]" icon={<PointIcon />} text="Other facilities" w={212.500} />
        </div>
        <div className="absolute left-[3156px] top-[424px] flex h-[59px] w-[163px] items-center border-[3px] border-black bg-[#ffffdc] pl-[9px] pt-[3px] font-bold shadow-[7px_8px_5px_-1px_rgba(60,70,70,0.6)]">
          <Fit w={140}>Hospitals</Fit>
        </div>
        <span className="absolute left-[3847px] top-[2043px] h-[123px] w-px bg-[#ccd2d2]" />
      </main>
    </div>
  );
}
